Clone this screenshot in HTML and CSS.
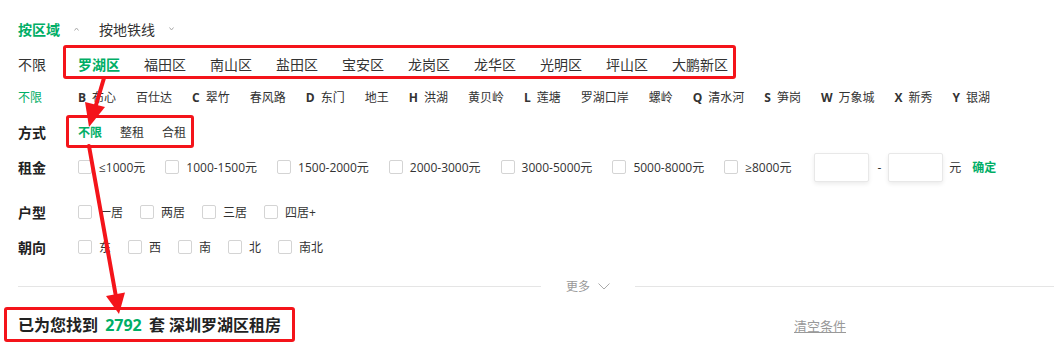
FILE: index.html
```html
<!DOCTYPE html>
<html lang="zh-CN">
<head>
    <meta charset="UTF-8">
    <meta name="viewport" content="width=device-width, initial-scale=1.0">
    <title>租房筛选</title>
    <link rel="stylesheet" href="styles.css">
</head>
<body>
    <div class="page">
        <div class="row tabs">
            <span class="tab active">按区域<svg class="caret" width="5" height="4" viewBox="0 0 5 4"><polyline points="0.5,3.5 2.5,1 4.5,3.5"/></svg></span>
            <span class="tab">按地铁线<svg class="caret" width="5" height="4" viewBox="0 0 5 4"><polyline points="0.5,0.5 2.5,3 4.5,0.5"/></svg></span>
        </div>

        <div class="row big">
            <span class="label plain">不限</span>
            <div class="list districts mark mark-district">
                <span class="on">罗湖区</span>
                <span>福田区</span>
                <span>南山区</span>
                <span>盐田区</span>
                <span>宝安区</span>
                <span>龙岗区</span>
                <span>龙华区</span>
                <span>光明区</span>
                <span>坪山区</span>
                <span>大鹏新区</span>
            </div>
        </div>

        <div class="row sub">
            <span class="label green">不限</span>
            <div class="list areas">
                <span><b>B</b>布心</span>
                <span>百仕达</span>
                <span><b>C</b>翠竹</span>
                <span>春风路</span>
                <span><b>D</b>东门</span>
                <span>地王</span>
                <span><b>H</b>洪湖</span>
                <span>黄贝岭</span>
                <span><b>L</b>莲塘</span>
                <span>罗湖口岸</span>
                <span>螺岭</span>
                <span><b>Q</b>清水河</span>
                <span><b>S</b>笋岗</span>
                <span><b>W</b>万象城</span>
                <span><b>X</b>新秀</span>
                <span><b>Y</b>银湖</span>
            </div>
        </div>

        <div class="row">
            <span class="label">方式</span>
            <div class="list modes mark mark-mode">
                <span class="on">不限</span>
                <span>整租</span>
                <span>合租</span>
            </div>
        </div>

        <div class="row">
            <span class="label">租金</span>
            <div class="checks rent">
                <span class="check"><i class="box"></i>≤1000元</span>
                <span class="check"><i class="box"></i>1000-1500元</span>
                <span class="check"><i class="box"></i>1500-2000元</span>
                <span class="check"><i class="box"></i>2000-3000元</span>
                <span class="check"><i class="box"></i>3000-5000元</span>
                <span class="check"><i class="box"></i>5000-8000元</span>
                <span class="check"><i class="box"></i>≥8000元</span>
            </div>
            <div class="range">
                <input type="text">
                <span class="dash">-</span>
                <input type="text">
                <span class="unit">元</span>
                <span class="ok">确定</span>
            </div>
        </div>

        <div class="row gap-top">
            <span class="label">户型</span>
            <div class="checks">
                <span class="check"><i class="box"></i>一居</span>
                <span class="check"><i class="box"></i>两居</span>
                <span class="check"><i class="box"></i>三居</span>
                <span class="check"><i class="box"></i>四居+</span>
            </div>
        </div>

        <div class="row">
            <span class="label">朝向</span>
            <div class="checks">
                <span class="check"><i class="box"></i>东</span>
                <span class="check"><i class="box"></i>西</span>
                <span class="check"><i class="box"></i>南</span>
                <span class="check"><i class="box"></i>北</span>
                <span class="check"><i class="box"></i>南北</span>
            </div>
        </div>

        <div class="more">
            <span class="line first"></span>
            <span class="more-btn">更多<svg width="12" height="7" viewBox="0 0 12 7"><polyline points="0.5,0.5 6,6 11.5,0.5"/></svg></span>
            <span class="line"></span>
        </div>

        <div class="result">
            <div class="found">
                <h2 class="mark mark-result">已为您找到 <em>2792</em> 套 深圳罗湖区租房</h2>
            </div>
            <a class="clear" href="#">清空条件</a>
        </div>

        <!-- annotation arrows -->
        <svg class="arrows" width="1054" height="357" viewBox="0 0 1054 357">
            <line x1="104" y1="78" x2="96" y2="105"/>
            <polygon points="89,127 105,107 85,102"/>
            <line x1="89" y1="146" x2="115.5" y2="294"/>
            <polygon points="119,314 125,292.5 106,296"/>
        </svg>
    </div>
</body>
</html>
```

FILE: styles.css
```css
*{
    margin: 0;
    padding: 0;
    box-sizing: border-box;
}
body{
    font-family: "Open Sans", "Noto Sans CJK SC", sans-serif;
    color: #333;
    background: #fff;
}
.page{
    position: relative;
    width: 1054px;
    height: 357px;
    overflow: hidden;
    padding: 14px 0 0 18px;
}
.row{
    display: flex;
    align-items: center;
    height: 30px;
    margin-top: 5px;
    font-size: 12px;
}
.row.tabs{
    margin-top: 0;
}
.row.sub{
    margin-top: 3px;
}
.row.gap-top{
    margin-top: 15px;
}

/* tabs */
.tab{
    display: flex;
    align-items: center;
    font-size: 14px;
    color: #333;
    margin-right: 20px;
}
.tab.active{
    color: #00ae66;
    font-weight: bold;
}
.caret{
    margin-left: 14px;
    fill: none;
    stroke: #aaa;
    stroke-width: 1;
}

/* labels */
.label{
    width: 60px;
    flex: none;
    font-size: 14px;
    font-weight: bold;
    color: #222;
}
.label.plain{
    font-weight: normal;
    color: #333;
}
.label.green{
    font-size: 12px;
    font-weight: normal;
    color: #00ae66;
}

/* option lists */
.list{
    display: flex;
    align-items: center;
    height: 100%;
}
.districts{
    gap: 24px;
    font-size: 14px;
}
.areas{
    gap: 20px;
}
.areas b{
    margin-right: 6px;
    color: #333;
}
.modes{
    gap: 18px;
}
.list .on{
    color: #00ae66;
    font-weight: bold;
}

/* red annotation boxes */
.mark{
    position: relative;
}
.mark::after{
    content: "";
    position: absolute;
    border: 3px solid #f4141a;
    border-radius: 3px;
    pointer-events: none;
}
.mark-district::after{
    top: -4px;
    bottom: 0;
    left: -15px;
    right: -8px;
}
.mark-mode::after{
    top: -2px;
    bottom: -1px;
    left: -12px;
    right: -8px;
}
.mark-result::after{
    top: -3px;
    bottom: -2px;
    left: -14px;
    right: -14px;
}

/* checkboxes */
.checks{
    display: flex;
    align-items: center;
    gap: 17px;
}
.checks.rent{
    gap: 20px;
}
.check{
    display: flex;
    align-items: center;
    color: #333;
}
.box{
    width: 14px;
    height: 14px;
    border: 1px solid #d4d4d4;
    border-radius: 2px;
    background: #fff;
    margin-right: 7px;
}

/* price range */
.range{
    display: flex;
    align-items: center;
    margin-left: 23px;
}
.range input{
    width: 55px;
    height: 29px;
    border: 1px solid #e8e8e8;
    border-radius: 2px;
    box-shadow: 0 2px 4px rgba(0, 0, 0, 0.08);
    outline: none;
}
.dash{
    margin: 0 7px 0 8px;
}
.unit{
    margin: 0 11px 0 6px;
}
.ok{
    color: #00ae66;
    font-weight: bold;
}

/* more divider */
.more{
    display: flex;
    align-items: center;
    height: 20px;
    margin-top: 14px;
}
.more .line{
    flex: 1;
    height: 1px;
    background: #e5e5e5;
}
.more .line.first{
    flex: 0 0 523px;
}
.more-btn{
    display: flex;
    align-items: center;
    padding: 0 25px;
    font-size: 12px;
    color: #999;
}
.more-btn svg{
    margin-left: 8px;
    fill: none;
    stroke: #aaa;
    stroke-width: 1;
}

/* result */
.result{
    display: flex;
    align-items: center;
    height: 30px;
    margin-top: 14px;
}
.found{
    flex: 0 0 776px;
}
.found h2{
    display: inline-block;
    font-size: 16px;
    font-weight: bold;
    color: #222;
    line-height: 30px;
}
.found em{
    font-style: normal;
    color: #00ae66;
    margin: 0 3px;
}
.clear{
    font-size: 13px;
    color: #999;
    text-decoration: underline;
}

/* annotation arrows */
.arrows{
    position: absolute;
    top: 0;
    left: 0;
    pointer-events: none;
}
.arrows line{
    stroke: #f4141a;
    stroke-width: 4;
    stroke-linecap: round;
}
.arrows polygon{
    fill: #f4141a;
}
```
